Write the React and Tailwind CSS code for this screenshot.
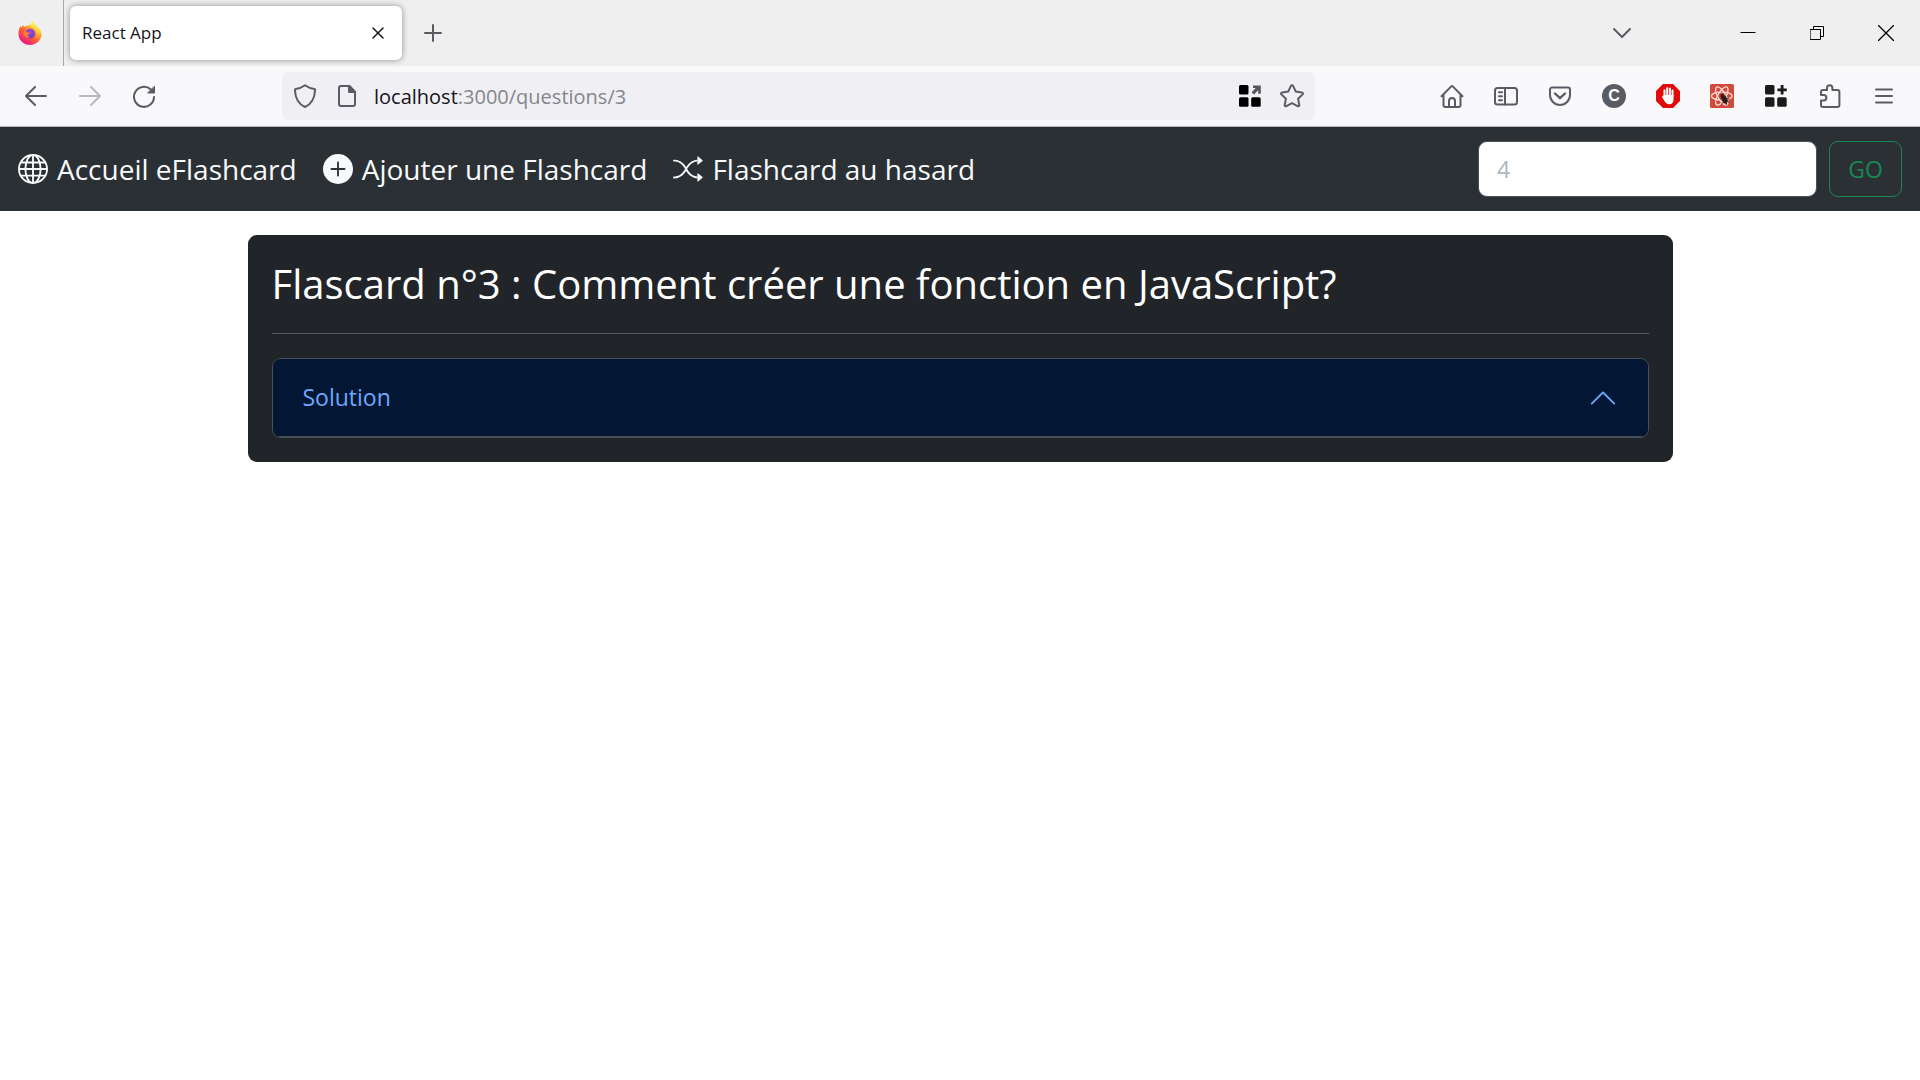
import React from "react";
import { BsGlobe, BsPlusCircleFill, BsShuffle, BsChevronUp } from "react-icons/bs";

function Svg({ children, className = "", w = 24, h = 24, sw = 2 }) {
  return (
    <svg
      width={w}
      height={h}
      viewBox={`0 0 ${w} ${h}`}
      fill="none"
      stroke="currentColor"
      strokeWidth={sw}
      strokeLinecap="round"
      strokeLinejoin="round"
      aria-hidden="true"
      className={"shrink-0 " + className}
    >
      {children}
    </svg>
  );
}

function FirefoxLogo() {
  return (
    <svg width="24" height="24" viewBox="0 0 24 24" aria-hidden="true">
      <defs>
        <linearGradient id="fxBody" x1="0.85" y1="0.1" x2="0.25" y2="0.95">
          <stop offset="0" stopColor="#fff44f" />
          <stop offset="0.3" stopColor="#ffb02e" />
          <stop offset="0.6" stopColor="#ff5a36" />
          <stop offset="1" stopColor="#e8178a" />
        </linearGradient>
        <linearGradient id="fxFlame" x1="0.5" y1="0" x2="0.6" y2="1">
          <stop offset="0" stopColor="#fff44f" />
          <stop offset="0.6" stopColor="#ffd23a" />
          <stop offset="1" stopColor="#ff8a2a" />
        </linearGradient>
        <radialGradient id="fxGlobe" cx="0.5" cy="0.3" r="0.8">
          <stop offset="0" stopColor="#a347d8" />
          <stop offset="1" stopColor="#5a3fd0" />
        </radialGradient>
      </defs>
      <path
        d="M2.6 5.2c.4-.2.7.6 1.1 1.3C4.2 5.2 5 4.3 5.600 4c0 .9.1 1.500.6 1.900 1.100-.6 3-1.300 5.300-1.300L15 .2c.6 2.600 2.200 3.600 3.600 5.200.5.600.8 1.200 1 1.800.2-.4.2-.9.200-1.300 2.600 2.500 3.700 5.200 3.700 7.400C23.500 19.200 18.400 24 12 24S.5 19 .5 13c0-3.200.8-6 2.100-7.800Z"
        fill="url(#fxBody)"
      />
      <path
        d="M15 .2c-1.900 1.500-2.700 3.700-2.400 5.600 4 .9 6.400 4 6.400 7.400 0 2-.7 3.600-1.800 4.900 3.600-1.600 5.200-5 4.500-8.700-.5-1.600-1.300-2.700-1.900-3.500 0 .4 0 .9-.2 1.300C18.800 4.400 15.600 3.500 15 .2Z"
        fill="url(#fxFlame)"
      />
      <circle cx="12.300" cy="12.600" r="4.800" fill="url(#fxGlobe)" />
      <path
        d="M5.500 10.400c1.500-.4 3.500.2 4.300 1 .9.100 2.300.1 2.500.4.200.8-1.600 1.400-2.300 2-.4.800.5 2.200 2.200 2.200-2.400 1.300-5.600.2-6.700-2.600Z"
        fill="#ff7a30"
      />
    </svg>
  );
}

function IconButton({ label, children, className = "w-[54px]" }) {
  return (
    <button
      type="button"
      aria-label={label}
      className={"flex h-12 shrink-0 items-center justify-center text-[#5b5b66] " + className}
    >
      {children}
    </button>
  );
}

function TabBar() {
  return (
    <div className="flex h-[66px] items-stretch bg-[#efefef]">
      <div className="flex w-16 shrink-0 items-center border-r border-[#a8a8a8] pl-[18px]">
        <FirefoxLogo />
      </div>
      <div className="flex flex-1 items-center pl-1.5">
        <div className="flex h-[54px] w-[332px] items-center justify-between rounded-md bg-white px-3 shadow-[0_0_6px_rgba(0,0,0,0.4)]">
          <span className="text-[17px] text-[#15141a]">React App</span>
          <IconButton label="Fermer l’onglet" className="w-6">
            <Svg w={12} h={12} sw={1.5} className="text-[#15141a]">
              <path d="M1 1l10 10M11 1L1 11" />
            </Svg>
          </IconButton>
        </div>
        <IconButton label="Nouvel onglet" className="ml-1 w-[54px]">
          <Svg w={18} h={18}>
            <path d="M9 1v16M1 9h16" />
          </Svg>
        </IconButton>
      </div>
      <div className="flex items-center text-black">
        <IconButton label="Lister les onglets" className="mr-16 w-[54px]">
          <Svg w={20} h={12}>
            <path d="M2 2l8 8 8-8" />
          </Svg>
        </IconButton>
        <IconButton label="Réduire" className="w-[69px]">
          <Svg w={16} h={16} sw={1} className="text-black">
            <path d="M.5 7.500h15" strokeLinecap="butt" />
          </Svg>
        </IconButton>
        <IconButton label="Restaurer" className="w-[69px]">
          <Svg w={14} h={14} sw={1} className="text-black">
            <path d="M.5 3.500h10v10H.5zM3.500 3.500v-3h10v10h-3" strokeLinejoin="miter" />
          </Svg>
        </IconButton>
        <IconButton label="Fermer" className="w-[69px]">
          <Svg w={16} h={16} sw={1.3} className="text-black">
            <path d="M.5.5l15 15M15.500.5l-15 15" />
          </Svg>
        </IconButton>
      </div>
    </div>
  );
}

function ExtensionGrid({ arrow }) {
  return (
    <svg width="24" height="24" viewBox="0 0 24 24" fill={arrow ? "#000" : "#1a1a1a"} aria-hidden="true">
      <rect x="1" y="1" width="9.500" height="9.500" rx="1.500" />
      <rect x="1" y="13.300" width="9.500" height="9.500" rx="1.500" />
      <rect x="13.200" y="13.300" width="9.500" height="9.500" rx="1.500" />
      {arrow ? (
        <path d="M15 1.500h7.800v8.300h-2.600V6.200l-4.200 4.300-2.400-2.300L17.700 4H15z" fill="#57575f" />
      ) : (
        <path d="M16.700 1h2.800v3.400h3.300v2.800h-3.300v3.400h-2.800V7.200h-3.300V4.400h3.300z" />
      )}
    </svg>
  );
}

function UrlBar() {
  return (
    <div className="flex h-12 flex-1 items-center rounded-md bg-[#f0f0f4] pr-0.5">
      <IconButton label="Protection contre le pistage" className="w-[46px]">
        <Svg>
          <path d="M12 1.200c3 2.200 6 3.300 9.300 3.700.6.100.9.500.8 1.100C21.700 14 18.500 20.200 12 23 5.500 20.200 2.300 14 1.900 6c0-.6.300-1 .8-1.100C6 4.500 9 3.400 12 1.200Z" />
        </Svg>
      </IconButton>
      <IconButton label="Informations du site" className="w-[38px]">
        <Svg w={20}>
          <path d="M12.500 2H4a2 2 0 0 0-2 2v16a2 2 0 0 0 2 2h12a2 2 0 0 0 2-2V8z" />
          <path d="M12 2v6h6z" fill="currentColor" />
        </Svg>
      </IconButton>
      <div className="flex flex-1 items-center pt-0.5 pl-2 text-xl">
        <span className="text-[#15141a]">localhost</span>
        <span className="text-[#85858c]">:3000/questions/3</span>
      </div>
      <IconButton label="Extension" className="w-[42px]">
        <ExtensionGrid arrow />
      </IconButton>
      <IconButton label="Marquer cette page" className="w-[42px]">
        <Svg>
          <path d="M12 1.200c.5 0 .9.300 1.100.7l2.700 5.700 6.100.8c1 .1 1.400 1.300.7 2l-4.500 4.300 1.200 6.200c.2 1-.8 1.700-1.700 1.200L12 19.200l-5.600 2.900c-.9.500-1.900-.2-1.700-1.200l1.200-6.200L1.400 10.400c-.7-.7-.3-1.900.7-2l6.100-.8 2.700-5.700c.2-.4.600-.7 1.100-.7Z" />
        </Svg>
      </IconButton>
    </div>
  );
}

function Toolbar() {
  return (
    <div className="flex items-center border-b border-[#b4b8b8] bg-[#f9f9fb] px-[9px] py-1.5">
      <IconButton label="Page précédente">
        <Svg w={22} h={20}>
          <path d="M10 1L1 10l9 9M1 10h20" />
        </Svg>
      </IconButton>
      <IconButton label="Page suivante">
        <Svg w={22} h={20} className="opacity-40">
          <path d="M12 1l9 9-9 9M21 10H1" />
        </Svg>
      </IconButton>
      <IconButton label="Actualiser">
        <Svg>
          <path d="M22 13a10 10 0 1 1-3.200-7.500" />
          <path d="M22.500 2.500v6.500H16z" fill="currentColor" strokeWidth="1" />
        </Svg>
      </IconButton>
      <div className="w-[111px]" />
      <UrlBar />
      <div className="w-[110px]" />
      <IconButton label="Accueil">
        <Svg>
          <path d="M1.500 12.300L11 2.600c.6-.6 1.400-.6 2 0l9.500 9.700M3.500 10.500V21a2 2 0 0 0 2 2h13a2 2 0 0 0 2-2V10.500" />
          <path d="M9 23v-6a3 3 0 0 1 6 0v6" />
        </Svg>
      </IconButton>
      <IconButton label="Panneau latéral">
        <Svg>
          <rect x="1" y="4" width="22" height="16.500" rx="2.500" />
          <path d="M11 4v16.500M5 8.200h3M5 12.200h3M5 16.200h3" />
        </Svg>
      </IconButton>
      <IconButton label="Pocket">
        <Svg>
          <path d="M4 3.500h16a2 2 0 0 1 2 2V11c0 5.500-4.500 10-10 10S2 16.500 2 11V5.500a2 2 0 0 1 2-2Z" />
          <path d="M7 9.500l5 4.700 5-4.700" strokeWidth="2.400" />
        </Svg>
      </IconButton>
      <IconButton label="Compte">
        <span className="flex size-6 items-center justify-center rounded-full bg-[#5b5b66] font-['Liberation_Sans',sans-serif] text-base font-bold text-white">
          C
        </span>
      </IconButton>
      <IconButton label="AdBlock">
        <svg width="24" height="24" viewBox="0 0 24 24" aria-hidden="true">
          <path d="M7 0h10l7 7v10l-7 7H7l-7-7V7z" fill="#e00b0b" />
          <path
            d="M8.500 13V6.200M11.200 11.500V4.300M13.900 11.500V4.600M16.500 12V6.600"
            stroke="#fff"
            strokeWidth="2"
            strokeLinecap="round"
          />
          <path
            d="M7.500 11h10v4.500c0 3-1.500 4.700-4.300 4.700-2.200 0-3.200-.8-4.200-2.400l-2.900-4.600c-.4-.8.700-1.400 1.400-.7z"
            fill="#fff"
          />
        </svg>
      </IconButton>
      <IconButton label="React Developer Tools">
        <svg width="24" height="24" viewBox="0 0 24 24" fill="none" aria-hidden="true">
          <rect width="24" height="24" rx="1.500" fill="#d24b3a" />
          <g stroke="#fbe3df" strokeWidth="1.200">
            <ellipse cx="11.800" cy="12" rx="10.300" ry="4" />
            <ellipse cx="11.800" cy="12" rx="10.300" ry="4" transform="rotate(60 11.800 12)" />
            <ellipse cx="11.800" cy="12" rx="10.300" ry="4" transform="rotate(120 11.800 12)" />
          </g>
          <g fill="#2a1a18" stroke="#2a1a18" strokeWidth="0.800">
            <ellipse cx="14.600" cy="15.600" rx="2.400" ry="3.500" transform="rotate(-30 14.600 15.600)" />
            <circle cx="12.300" cy="11.800" r="1.600" />
            <path d="M10 15l3-.5M11.500 20l2-2.500M16.500 21v-3M15.500 11.500l.5 2M19.500 15l-3-.5M19.500 19l-2-2" />
          </g>
        </svg>
      </IconButton>
      <IconButton label="Extension de groupes">
        <ExtensionGrid />
      </IconButton>
      <IconButton label="Extensions">
        <Svg>
          <path d="M9 6V4a2.700 2.700 0 0 1 5.400 0v2h5a2 2 0 0 1 2 2v13a2 2 0 0 1-2 2H5a2 2 0 0 1-2-2v-4.500h2.700a2.700 2.700 0 0 0 0-5.400H3V8a2 2 0 0 1 2-2z" />
        </Svg>
      </IconButton>
      <IconButton label="Menu">
        <Svg w={18} h={16}>
          <path d="M1 1.500h16M1 8h16M1 14.500h16" />
        </Svg>
      </IconButton>
    </div>
  );
}

function NavLink({ href, icon: Icon, children }) {
  return (
    <a href={href} className="flex items-center gap-[9px] text-[28px] leading-[44px] whitespace-nowrap text-[#f8f9fa]">
      <Icon className="size-[30px] shrink-0" aria-hidden="true" />
      <span>{children}</span>
    </a>
  );
}

function Navbar() {
  return (
    <nav className="flex h-[84px] items-center justify-between bg-[#2b3035] px-[18px]">
      <div className="flex items-center gap-[26px]">
        <NavLink href="/" icon={BsGlobe}>Accueil eFlashcard</NavLink>
        <NavLink href="/ajouter" icon={BsPlusCircleFill}>Ajouter une Flashcard</NavLink>
        <NavLink href="/hasard" icon={BsShuffle}>Flashcard au hasard</NavLink>
      </div>
      <form className="flex items-center gap-3 text-[23px]" onSubmit={(e) => e.preventDefault()}>
        <input
          type="text"
          aria-label="Numéro de la flashcard"
          placeholder="4"
          className="h-14 w-[339px] rounded-[9px] border border-[#495057] bg-white px-[18px] text-[#212529] placeholder:text-[#adb5bd]"
        />
        <button type="submit" className="h-14 w-[73px] rounded-[9px] border border-[#198754] text-[#198754]">
          GO
        </button>
      </form>
    </nav>
  );
}

function Flashcard() {
  return (
    <main className="mx-auto mt-6 w-full max-w-[1425px] rounded-[9px] bg-[#212529] p-6">
      <h1 className="text-[40px] leading-[50px] text-white">
        Flascard n°3 : Comment créer une fonction en JavaScript?
      </h1>
      <hr className="my-6 border-[#565a5e]" />
      <div className="overflow-hidden rounded-[9px] border border-[#495057]">
        <button
          type="button"
          aria-expanded="true"
          className="flex h-[78px] w-full items-center justify-between border-b border-[#495057] bg-[#031633] px-[30px] text-left text-[23px] text-[#6ea8fe]"
        >
          Solution
          <BsChevronUp className="size-[30px]" aria-hidden="true" />
        </button>
      </div>
    </main>
  );
}

export default function App() {
  return (
    <div className="min-h-screen bg-white font-['Open_Sans','Noto_Sans',sans-serif]">
      <header>
        <TabBar />
        <Toolbar />
      </header>
      <Navbar />
      <Flashcard />
    </div>
  );
}
